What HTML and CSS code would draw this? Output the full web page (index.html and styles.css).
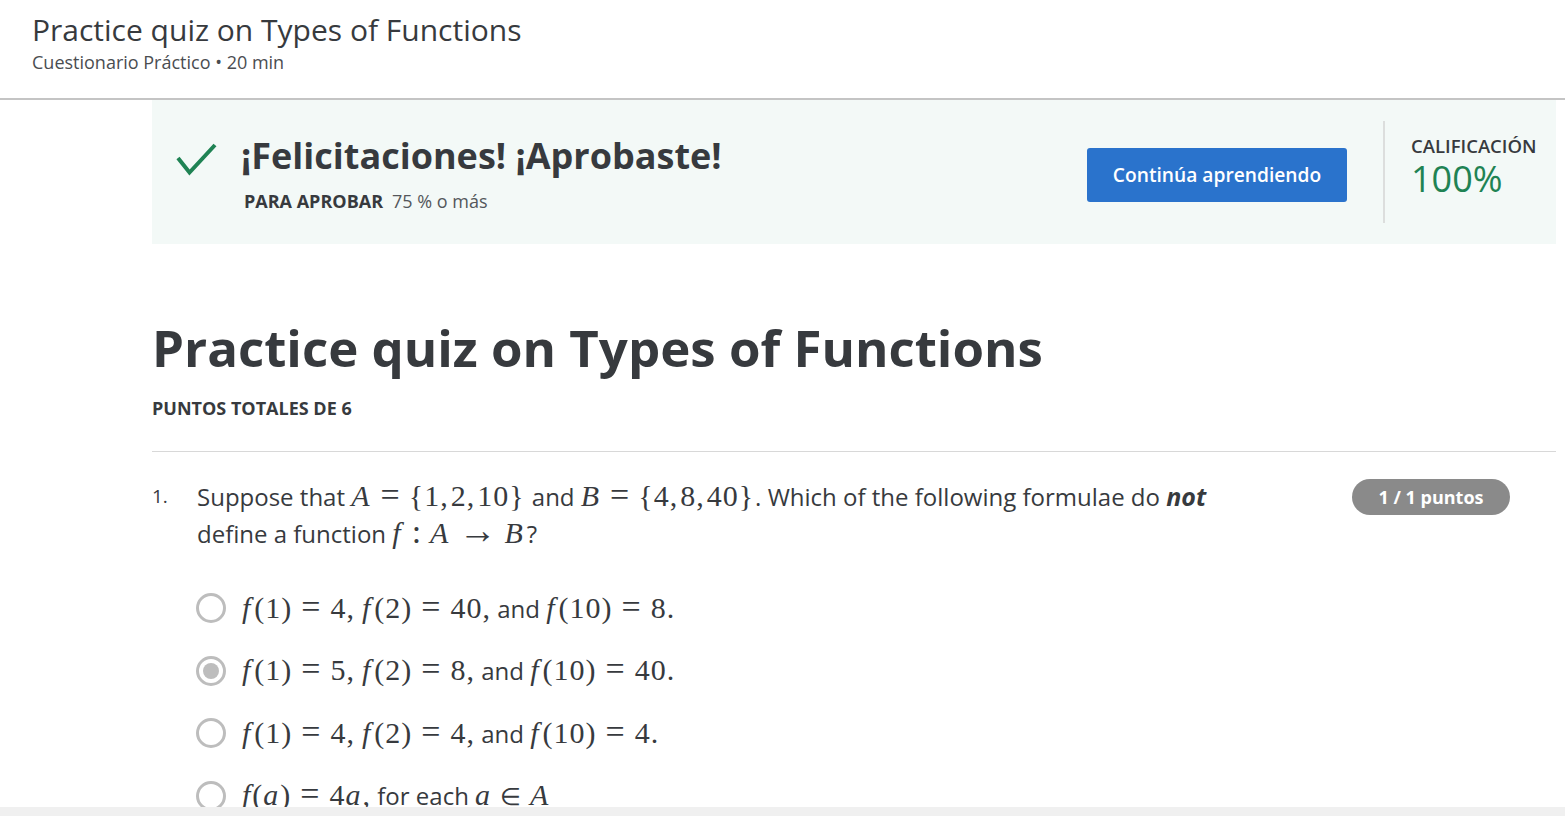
FILE: index.html
```html
<!DOCTYPE html>
<html lang="es">
<head>
  <meta charset="UTF-8" />
  <title>Practice quiz on Types of Functions</title>
  <link rel="stylesheet" href="styles.css">
</head>
<body>
  <header class="top-bar">
    <div class="top-title">Practice quiz on Types of Functions</div>
    <div class="top-sub">Cuestionario Práctico • 20 min</div>
  </header>

  <main class="content">
    <!-- Resultado -->
    <section class="banner">
      <svg class="check" width="44" height="36" viewBox="0 0 44 36">
        <path d="M3 16 L14.5 30.5 L40 3" fill="none" stroke="#1f8354" stroke-width="4"/>
      </svg>
      <div class="banner-text">
        <div class="banner-title">¡Felicitaciones! ¡Aprobaste!</div>
        <div class="banner-pass"><b>PARA APROBAR</b><span>75 % o más</span></div>
      </div>
      <button class="continue" type="button">Continúa aprendiendo</button>
      <div class="grade">
        <div class="grade-label">CALIFICACIÓN</div>
        <div class="grade-value">100%</div>
      </div>
    </section>

    <h1 class="quiz-title">Practice quiz on Types of Functions</h1>
    <div class="quiz-points">PUNTOS TOTALES DE 6</div>

    <!-- Pregunta 1 -->
    <section class="question">
      <div class="q-number">1.</div>
      <div class="q-body">
        <p class="q-text">Suppose that <span class="m"><i>A</i><span class="r">=</span>{1,<span class="c"></span>2,<span class="c"></span>10}</span> and <span class="m"><i>B</i><span class="r">=</span>{4,<span class="c"></span>8,<span class="c"></span>40}</span>. Which of the following formulae do <b class="not"><i>not</i></b> define a function <span class="m"><i>f</i><span class="r">:</span><i>A</i><span class="r arrow">→</span><i>B</i></span>?</p>
        <label class="option"><span class="radio"></span><span><span class="m"><i>f</i>(1)<span class="r">=</span>4,<span class="c"></span><i>f</i>(2)<span class="r">=</span>40,</span> and <span class="m"><i>f</i>(10)<span class="r">=</span>8.</span></span></label>
        <label class="option"><span class="radio checked"></span><span><span class="m"><i>f</i>(1)<span class="r">=</span>5,<span class="c"></span><i>f</i>(2)<span class="r">=</span>8,</span> and <span class="m"><i>f</i>(10)<span class="r">=</span>40.</span></span></label>
        <label class="option"><span class="radio"></span><span><span class="m"><i>f</i>(1)<span class="r">=</span>4,<span class="c"></span><i>f</i>(2)<span class="r">=</span>4,</span> and <span class="m"><i>f</i>(10)<span class="r">=</span>4.</span></span></label>
        <label class="option option-tight"><span class="radio"></span><span><span class="m"><i>f</i>(<i>a</i>)<span class="r">=</span>4<i>a</i>,</span> for each <span class="m"><i>a</i><span class="r in">∈</span><i>A</i></span></span></label>
      </div>
      <div class="q-score"><span class="pill">1 / 1 puntos</span></div>
    </section>
  </main>

  <div class="bottom-strip"></div>
</body>
</html>
```

FILE: styles.css
```css
html, body {
  height: 100%;
  overflow: hidden;
}
body {
  margin: 0;
  font-family: "Open Sans", sans-serif;
  color: #373a3e;
  background: #fff;
}
.top-bar {
  height: 87px;
  padding: 11px 32px 0;
  border-bottom: 2px solid #c4c4c4;
}
.top-title {
  font-size: 30px;
  line-height: 38px;
}
.top-sub {
  font-size: 18px;
  line-height: 26px;
  color: #4a4d51;
}
.content {
  margin-left: 152px;
  width: 1404px;
}
.banner {
  height: 144px;
  background: #f3f9f7;
  display: flex;
  align-items: center;
}
.check {
  margin: 0 22px 24px 23px;
  flex: none;
}
.banner-text {
  flex: 1;
  margin-top: 1px;
}
.banner-title {
  font-size: 36px;
  font-weight: 700;
  line-height: 48px;
}
.banner-pass {
  margin: 9px 0 0 3px;
  font-size: 18px;
  line-height: 24px;
}
.banner-pass span {
  margin-left: 9px;
  color: #54575b;
}
.continue {
  width: 260px;
  height: 54px;
  margin: 6px 36px 0 0;
  padding: 0 0 2px;
  background: #2a73cc;
  color: #fff;
  border: none;
  border-radius: 3px;
  font-family: inherit;
  font-size: 19.2px;
  font-weight: 600;
  cursor: pointer;
}
.grade {
  width: 173px;
  height: 102px;
  box-sizing: border-box;
  border-left: 2px solid #dcdedd;
  padding: 11px 0 0 26px;
}
.grade-label {
  font-size: 18.5px;
  font-weight: 600;
  line-height: 27px;
}
.grade-value {
  font-size: 36px;
  line-height: 40px;
  color: #1f8354;
}
.quiz-title {
  margin: 68px 0 0;
  font-size: 51px;
  line-height: 70px;
  font-weight: 700;
}
.quiz-points {
  margin-top: 14px;
  font-size: 18px;
  font-weight: 700;
  line-height: 24px;
  padding-bottom: 31px;
  border-bottom: 1px solid #d8d8d8;
}
.question {
  display: flex;
  padding-top: 26px;
}
.q-number {
  width: 45px;
  flex: none;
  font-size: 19px;
  line-height: 36px;
}
.q-body {
  width: 1030px;
  flex: none;
}
.q-text {
  margin: 0 0 25px;
  font-size: 24px;
  line-height: 37px;
}
.q-text .m {
  margin-right: 1px;
}
.q-text .c {
  margin-left: 2px;
}
.not {
  font-size: 25px;
}
.q-score {
  margin-left: 125px;
}
.pill {
  display: block;
  width: 158px;
  height: 36px;
  margin-top: 1px;
  line-height: 36px;
  text-align: center;
  background: #8a8a8a;
  color: #fff;
  border-radius: 18px;
  font-size: 18px;
  font-weight: 700;
}
.option {
  display: flex;
  align-items: center;
  gap: 16px;
  height: 62.5px;
  margin-left: -1px;
  font-size: 24px;
}
.radio {
  width: 30px;
  height: 30px;
  box-sizing: border-box;
  border: 3px solid #bdbdbd;
  border-radius: 50%;
  flex: none;
  display: flex;
  align-items: center;
  justify-content: center;
}
.radio.checked::after {
  content: "";
  width: 16px;
  height: 16px;
  border-radius: 50%;
  background: #bdbdbd;
}
/* formulas */
.m {
  font-family: "Liberation Serif", serif;
  font-size: 30px;
  line-height: 1;
  letter-spacing: 1px;
}
.m i {
  margin-right: 2px;
}
.option .m i {
  margin-right: 3px;
}
.option-tight .m i {
  margin-right: 1px;
}
.r {
  margin: 0 8px;
  font-size: 34px;
  line-height: 0;
}
.r.arrow {
  margin: 0 7px;
  font-size: 38px;
}
.option .r {
  margin: 0 9px;
}
.option .r.in {
  margin: 0 8px;
  font-size: 24px;
}
.c {
  margin-left: 7px;
}
.bottom-strip {
  position: fixed;
  left: 0;
  right: 0;
  bottom: 0;
  height: 9px;
  background: #f0f0f0;
}
```
